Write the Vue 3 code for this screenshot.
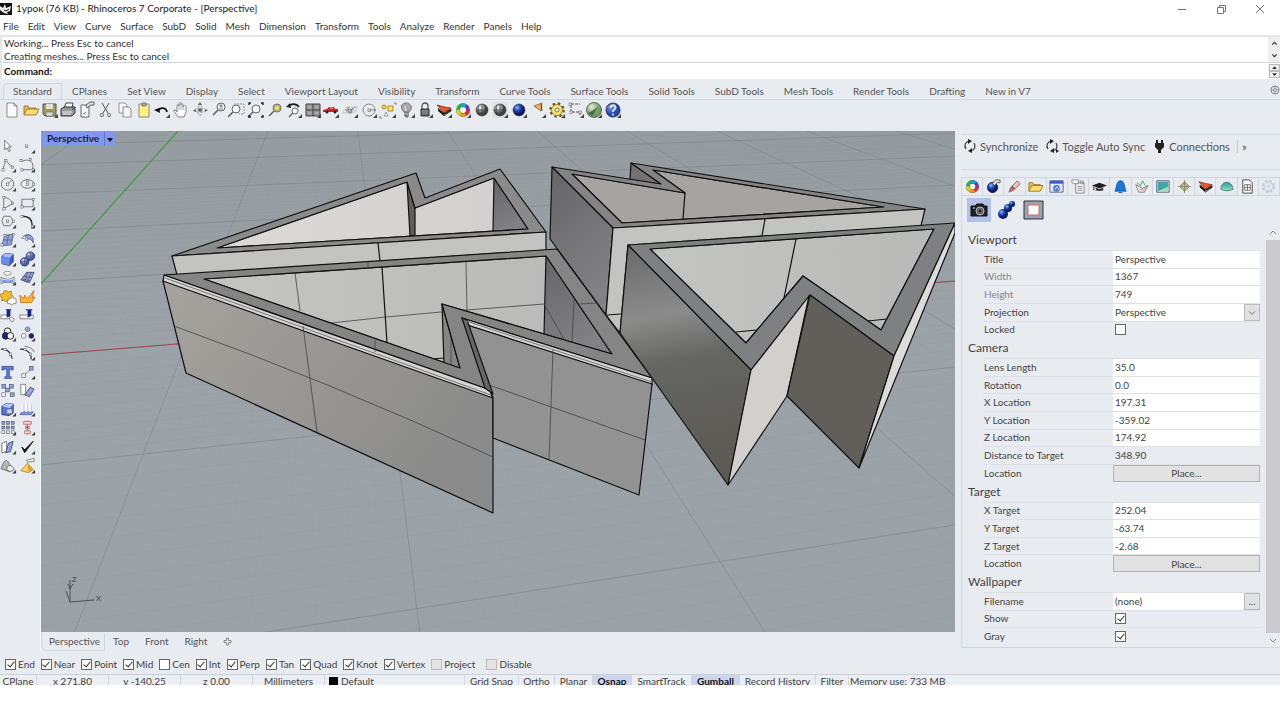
<script setup>
import { reactive, ref } from 'vue'

const menu = ['File', 'Edit', 'View', 'Curve', 'Surface', 'SubD', 'Solid', 'Mesh', 'Dimension', 'Transform', 'Tools', 'Analyze', 'Render', 'Panels', 'Help']

const toolbarTabs = ['Standard', 'CPlanes', 'Set View', 'Display', 'Select', 'Viewport Layout', 'Visibility', 'Transform', 'Curve Tools', 'Surface Tools', 'Solid Tools', 'SubD Tools', 'Mesh Tools', 'Render Tools', 'Drafting', 'New in V7']
const activeTab = ref('Standard')

// shared pieces, all icons are drawn on an 18x18 box
const flyout = '<path d="M17 13v4h-4z" fill="#444"/>'
const hue = ['#e23', '#f90', '#dd0', '#2b3', '#1ad', '#63d']
const wheel = '<circle cx="9" cy="9" r="6.800" fill="#555"/><circle cx="9" cy="9" r="3" fill="#fff"/>' + hue.map((c, i) => `<circle cx="9" cy="9" r="5" fill="none" stroke="${c}" stroke-width="3" stroke-dasharray="5.3 26.2" stroke-dashoffset="${-i * 5.24}"/>`).join('')
const sphere = (id) => `<circle cx="9" cy="9" r="6" fill="url(#${id})" stroke="#333" stroke-width=".6"/>`
const wires = '<path d="M3 9h12M9 3v12M6 4c-1 3-1 7 0 10M12 4c1 3 1 7 0 10" fill="none" stroke="#333" stroke-width=".6"/>'
const layers = '<path d="M3 9l6 6 7-5V8l-7 4z" fill="#fff" stroke="#333" stroke-width=".8"/><path d="M3 7l6 5v3L3 10z" fill="#222"/><path d="M9 12l7-4v2l-7 4z" fill="#222"/><path d="M2 4l8 2 6 1-7 5z" fill="#e8582a" stroke="#7a2010" stroke-width=".7"/>'
const folder = '<path d="M2 14V5h4l1 2h7v2" fill="#e8bd4a" stroke="#8a6a20" stroke-width=".8"/><path d="M2 14l3-6h12l-3 6z" fill="#ffdc6a" stroke="#8a6a20" stroke-width=".8"/>'
const lens = (x, y) => `<circle cx="${x}" cy="${y}" r="4" fill="#f4f6f8" stroke="#666"/><path d="M${x - 3} ${y + 3}l-5 5" stroke="#666" stroke-width="1.6"/>`
const line = (d) => `<path d="${d}" fill="none" stroke="#555" stroke-width=".8"/>`
const dot = (x, y, c = '#fff') => `<rect x="${x - 1}" y="${y - 1}" width="2.4" height="2.4" fill="${c}" stroke="#555" stroke-width=".6"/>`
const box = (x, y, c = '#8fa5e6', s = 4) => `<rect x="${x}" y="${y}" width="${s}" height="${s}" fill="${c}" stroke="#445" stroke-width=".6"/>`

const icons = {
  file: '<path d="M4 2h7l3 3v11H4z" fill="#fafafa" stroke="#777" stroke-width=".8"/><path d="M11 2v3h3" fill="none" stroke="#777" stroke-width=".8"/>',
  open: folder,
  save: '<path d="M2 3h13v12H4l-2-2z" fill="#a59c52" stroke="#555"/><path d="M5 3h7v5H5z" fill="#ddd"/><path d="M5 11h7v4H5z" fill="#ddd" stroke="#555" stroke-width=".6"/>' + flyout,
  print: '<path d="M5 7l2-5h7l-1 5" fill="#fff" stroke="#444"/><path d="M2 8l3-2h11v6l-3 3H2z" fill="#999" stroke="#333"/><path d="M3 11h10M4 13h8" stroke="#eee"/><path d="M13 9l3-3" stroke="#333"/>',
  props: '<path d="M3 4h8v12H3z" fill="#f6f6f6" stroke="#666"/><path d="M8 4l4-3h4v3h-3l-4 3z" fill="#ddd" stroke="#444" stroke-width=".8"/><path d="M5 12l1 1 2-2" fill="none" stroke="#666" stroke-width=".8"/>',
  cut: '<path d="M5 2l6 10M12 2L6 12" stroke="#555"/><circle cx="5" cy="14" r="1.6" fill="none" stroke="#555" stroke-width=".8"/><circle cx="12" cy="14" r="1.6" fill="none" stroke="#555" stroke-width=".8"/>',
  copy: '<path d="M3 2h6l2 2v8H3z" fill="#f6f6f6" stroke="#888" stroke-width=".8"/><path d="M7 6h6l2 2v8H7z" fill="#f6f6f6" stroke="#777" stroke-width=".8"/>',
  paste: '<path d="M4 3h10v13H4z" fill="#fdf07c" stroke="#888"/><path d="M7 2h4v3H7z" fill="#aaa" stroke="#666" stroke-width=".8"/>',
  undo: '<path d="M5 10c2-4 8-4 9 1" fill="none" stroke="#111" stroke-width="1.800"/><path d="M1 9l5-2 1 5z" fill="#111"/>' + flyout,
  pan: '<path d="M6 16l-4-6c0-2 2-1 3 1V5c0-2 2-2 2 0V3c0-2 2-2 2 0v1c0-2 2-2 2 0v2c0-2 3-2 3 0v5l-2 5z" fill="#fff" stroke="#666" stroke-width=".8"/><path d="M7 5v4M9 4v5M11 6v3" stroke="#888" stroke-width=".7"/>',
  rotate: '<ellipse cx="9" cy="9" rx="6" ry="2" fill="none" stroke="#999" stroke-dasharray="3 1" stroke-width=".8"/><ellipse cx="9" cy="9" rx="2" ry="6" fill="none" stroke="#999" stroke-dasharray="3 1" stroke-width=".8"/><path d="M9 7v4M7 9h4" stroke="#333"/><path d="M9 1l2 3H7zM2 10l3-2v3zM17 9l-3-1v3z" fill="#666"/>',
  zoomDyn: lens(11, 6) + '<path d="M9 5h4M11 3v4M9 8h4" stroke="#555" stroke-width=".7"/>',
  zoomWin: lens(8, 8) + '<path d="M6 3h10v10h-5" fill="none" stroke="#777" stroke-dasharray="2 1" stroke-width=".8"/>',
  zoomExt: lens(9, 8) + '<path d="M2 4V2h2M14 2h2v2M16 14v2h-2M2 14v2h2" fill="none" stroke="#222" stroke-width="1.4"/>',
  zoomSel: lens(11, 7) + '<circle cx="11" cy="7" r="2.8" fill="#f3e23a" stroke="#887" stroke-width=".8"/>',
  undoView: '<path d="M4 5c3-3 8-2 10 1" fill="none" stroke="#222" stroke-width="1.800"/><path d="M1 6l4-4 1 5z" fill="#222"/><circle cx="10" cy="10" r="3" fill="#fff" stroke="#666"/><path d="M8 12l-4 4" stroke="#666" stroke-width="1.4"/>' + flyout,
  views: '<path d="M2 3h14v12H2z" fill="#999" stroke="#444"/><path d="M9 3v12M2 9h14" stroke="#444"/><path d="M4 6h3M11 6h3M4 12h3M11 12h3" stroke="#bbb"/>' + flyout,
  car: '<path d="M1 9l4-1 2-2h5l1 2h3v3H1z" fill="#c22"/><circle cx="5" cy="11" r="1.5" fill="#222"/><circle cx="13" cy="11" r="1.5" fill="#222"/><path d="M8 7h3" stroke="#fbb"/>' + flyout,
  cplane: '<path d="M1 12l5-6h11l-4 6zM4 9h11M7 6l-2 6M12 6l-2 6" fill="none" stroke="#bbb" stroke-width=".8"/><path d="M5 10l3-4M8 11l6-5" stroke="#666" stroke-width=".8"/><circle cx="9" cy="10" r="2" fill="none" stroke="#555" stroke-width=".7"/>' + flyout,
  circleC: '<circle cx="9" cy="9" r="6" fill="none" stroke="#888"/><path d="M9 9h7" stroke="#777"/>' + dot(9, 9) + flyout,
  objects: '<circle cx="5" cy="6" r="2" fill="#ffd33b" stroke="#a70" stroke-width=".8"/><path d="M9 5h5v5H9z" fill="#ffe36a" stroke="#a70" stroke-width=".8"/><path d="M7 11l2 4H5z" fill="#fff" stroke="#777" stroke-width=".7"/><path d="M1 15v2h2M15 2h2v2" fill="none" stroke="#666" stroke-width=".8"/>' + flyout,
  bulb: '<path d="M6 11C1 6 4 2 8 2s8 4 3 9z" fill="#aaa" stroke="#777"/><path d="M7 5l1 5" stroke="#eee"/><path d="M6 11h5v4l-2 2-3-2z" fill="#777"/><path d="M6 13h5" stroke="#ccc"/>' + flyout,
  lock: '<path d="M6 8V5c0-4 6-4 6 0v3" fill="none" stroke="#555" stroke-width="1.3"/><path d="M5 8h8v7H5z" fill="#666" stroke="#333"/><path d="M6 10h6M6 12h6" stroke="#999"/>' + flyout,
  layers: layers + flyout,
  wheel: wheel + flyout,
  shade: sphere('gray') + wires,
  shade2: '<path d="M1 1h16v16H1z" fill="#dfe1e4"/>' + sphere('gray') + wires + flyout,
  render: sphere('blue') + flyout,
  spot: '<path d="M5 5l8-3-1 8z" fill="#f8b43a" stroke="#855" stroke-width=".8"/><path d="M12 3l1 7" stroke="#444"/>' + flyout,
  gear: '<circle cx="9" cy="9" r="6.5" fill="none" stroke="#665520" stroke-width="2.400" stroke-dasharray="2.4 2.7"/><circle cx="9" cy="9" r="5.500" fill="#ffe26a" stroke="#776630" stroke-width=".7"/><circle cx="9" cy="9" r="2" fill="#fff" stroke="#554" stroke-width=".8"/>' + flyout,
  dims: '<path d="M4 3h9M4 4v7h9v4" fill="none" stroke="#555" stroke-dasharray="3 1"/>' + dot(3, 3) + dot(4, 11) + dot(13, 11) + flyout,
  hopper: '<circle cx="9" cy="9" r="7.5" fill="url(#green)" stroke="#666"/><path d="M3 12l4-2 6-4-3 5-3 4z" fill="#4b6b45"/>' + flyout,
  help: '<circle cx="9" cy="9" r="7" fill="url(#help)" stroke="#236"/><path d="M6.500 7c0-4 6-3 5 0-.5 1.500-2.500 1.500-2.500 4M9 12.500v2" fill="none" stroke="#fff" stroke-width="1.6"/>' + flyout,

  pointer: '<path d="M5 3v10l2.500-2 2 4 1.500-1-2-4h3z" fill="#fff" stroke="#555" stroke-width=".8"/>',
  point: dot(8, 9) + flyout,
  polyline: line('M3 14L6 4l7 8') + dot(3, 14) + dot(6, 4) + dot(13, 11) + flyout,
  curve: line('M3 5c12-5 14 7 10 9H3') + dot(2, 4) + dot(3, 14) + dot(12, 3) + dot(15, 14) + flyout,
  circle: '<circle cx="8" cy="9" r="6.500" fill="none" stroke="#555" stroke-width=".8"/>' + line('M8 9l4-4') + dot(8, 9) + flyout,
  ellipse: '<ellipse cx="9" cy="9" rx="7" ry="4.500" fill="none" stroke="#555" stroke-width=".8"/>' + dot(9, 9) + dot(15, 9) + dot(9, 5) + flyout,
  arc: line('M4 3v12l9-5c0-3-4-7-9-7') + dot(4, 3) + dot(4, 15) + dot(13, 9) + flyout,
  rect: line('M3 5h12v8H3z') + dot(3, 13) + dot(15, 5) + flyout,
  polygon: line('M4 4h7l3 5-3 5H4L2 9z') + dot(8, 9) + dot(14, 9) + flyout,
  fillet: '<path d="M4 4c7 0 10 4 10 10" fill="none" stroke="#222" stroke-width="1.400"/>' + dot(3, 4) + dot(14, 15) + flyout,
  patch: '<path d="M5 4l9-1-2 11-10 1z" fill="#8fa5e6" stroke="#447" stroke-width=".8"/>' + line('M4 9h9M9 4L7 14') + dot(5, 4) + dot(14, 3) + dot(2, 14) + flyout,
  surface: '<path d="M3 7c3-4 7-5 9-2l-4 5c-1-2-2-3-5-3z" fill="#fff" stroke="#555" stroke-width=".8"/><path d="M6 5c4-3 8-1 9 3v4c-1-3-4-5-6-4z" fill="#8fa5e6" stroke="#447" stroke-width=".8"/>' + flyout,
  cube: '<path d="M2 6l4-3 8 1v8l-4 4-8-2z" fill="#3d5fd0" stroke="#225" stroke-width=".8"/><path d="M2 6l4-3 8 1-4 4z" fill="#a9bbf8"/><path d="M2 6l8 2v8l-8-2z" fill="#6c8ce8"/>' + flyout,
  balls: '<circle cx="6" cy="12" r="4.500" fill="url(#soft)" stroke="#225" stroke-width=".8"/><circle cx="12" cy="6" r="4.500" fill="url(#soft)" stroke="#225" stroke-width=".8"/>' + line('M2 12h8M8 6h8M6 8v8M12 2v8') + flyout,
  cylinder: '<ellipse cx="8" cy="4" rx="4" ry="2" fill="#fff" stroke="#777" stroke-width=".8"/><path d="M1 8c4 3 10 3 14 0v7c-4-2-10-2-14 0z" fill="#fff" stroke="#666" stroke-width=".8"/><path d="M2 10c4 2 9 2 12 0v4c-4-1-8-1-12 0z" fill="#7e99e8"/>' + flyout,
  mesh: '<path d="M2 11l6-8h8l-5 11z" fill="#8fa5e6" stroke="#336" stroke-width=".8"/>' + line('M5 7l9 2M9 3L6 13M3 10l9 2M13 3L8 14') + flyout,
  puzzle: '<path d="M1 6l3-1c-1-3 3-4 4-1l4-1v4c3 0 2 4 0 3l-1 3-3-1c0 3-4 2-3 0l-3 1V9C-1 9 0 6 1 6z" fill="#ffbe2e" stroke="#9a6a10" stroke-width=".8"/><path d="M9 11l3-1c0-2 3-1 2 0l3 1v5h-3c0 2-3 2-3 0H8v-2z" fill="#fff" stroke="#777" stroke-width=".8"/>',
  explode: '<path d="M2 15L1 7l4 4 1-4 3 4 7-9-2 8 3-1-4 6z" fill="#ffb52e" stroke="#b86a10" stroke-width=".8"/>',
  trim: '<path d="M1 9h9v4H1z" fill="#fff" stroke="#666" stroke-width=".8"/><path d="M6 3h6v1h-1v6l-4 2V4H6z" fill="#16258a"/><path d="M10 13l2-2 3 2-1 3h-2z" fill="none" stroke="#777" stroke-width=".8"/>',
  split: '<path d="M1 9h14v4H1z" fill="#fff" stroke="#666" stroke-width=".8"/><path d="M7 3h7v1h-1v6l-4 2V4H7z" fill="#16258a"/>',
  group: '<circle cx="8" cy="6" r="3.500" fill="none" stroke="#222"/><circle cx="6" cy="11" r="3.500" fill="#16258a" stroke="#222"/><circle cx="11" cy="11" r="3.500" fill="#fff" stroke="#222"/>' + flyout,
  ungroup: '<circle cx="9" cy="4" r="2.500" fill="#8fa5e6" stroke="#666" stroke-width=".8"/><circle cx="5" cy="11" r="2.500" fill="#fff" stroke="#666" stroke-width=".8"/><circle cx="13" cy="11" r="2.500" fill="#16258a" stroke="#222" stroke-width=".8"/>' + flyout,
  blend: '<path d="M1 5c6-1 10 3 12 10" fill="none" stroke="#222" stroke-width="1.200"/>' + dot(5, 5) + dot(11, 10),
  match: '<path d="M1 5c7-1 12 4 12 11" fill="none" stroke="#222" stroke-width="1.200"/>' + line('M6 2c5 0 9 3 10 6') + dot(6, 5) + dot(12, 10) + flyout,
  text: '<path d="M2 3h12v4h-2V6h-2v8h2v2H5v-2h2V6H4v1H2z" fill="#5c7ad0" stroke="#2a3e8a" stroke-width=".6"/>',
  move: box(3, 11, '#fff') + box(11, 3) + line('M7 11l4-4') + flyout,
  array: box(2, 3, '#8fa5e6') + box(10, 3) + box(6, 7) + box(2, 12, '#fff') + box(11, 12),
  shear: '<path d="M2 3h5v11H2z" fill="#fff" stroke="#666" stroke-width=".8"/><path d="M6 14l6-8 4 2-5 8z" fill="#8fa5e6" stroke="#335" stroke-width=".8"/>',
  solid: '<path d="M2 6l5-3 7 1v9l-4 3-8-1z" fill="#5878d8" stroke="#225" stroke-width=".8"/><path d="M2 6l5-3 7 1-4 4z" fill="#b9c9fa"/><path d="M7 9h6v5H7z" fill="#c9d5fa" stroke="#446" stroke-width=".6"/>' + flyout,
  extrude: '<path d="M1 15l2-3h12l-2 3z" fill="#7e99e8" stroke="#447" stroke-width=".6"/><path d="M4 12V4M8 12V4M12 12V4" stroke="#fff" stroke-width="2"/><path d="M5 12V4M9 12V4M13 12V4" stroke="#aac" stroke-width=".6"/>' + flyout,
  grid: [2, 7, 12].map((x) => [2, 7, 12].map((y) => box(x, y, y > 7 ? '#fff' : '#8fa5e6', 3)).join('')).join('') + flyout,
  align: '<path d="M9 1v15" stroke="#b55" stroke-width=".8"/><path d="M5 2h8v3H5zM7 7h4v3H7zM6 12h6v3H6z" fill="#f2dede" stroke="#b55" stroke-width=".8"/><circle cx="9" cy="8.500" r="1" fill="#a22"/>' + flyout,
  panels: '<path d="M2 5l5-2v11l-5 1z" fill="#fff" stroke="#555" stroke-width=".8"/><path d="M6 15l3-10 5-2-3 11z" fill="#8fa5e6" stroke="#335" stroke-width=".8"/>' + flyout,
  check: '<path d="M3 9l3 3 9-9-9 12z" fill="#111" stroke="#111"/>' + flyout,
  hull: '<path d="M1 12l3-7c2-3 4-2 5 0l5 8-4 2z" fill="#b8b8b8" stroke="#666" stroke-width=".8"/><path d="M7 13c0-6 6-6 8 0l-4 2z" fill="#eee" stroke="#555" stroke-width=".8"/>' + flyout,
  pyramid: '<path d="M2 14l7-8 6 7-5 3z" fill="#ffd060" stroke="#a67a20" stroke-width=".8"/><path d="M9 6l1 10 5-3z" fill="#d8a030"/><path d="M8 3l8-2v3L9 5z" fill="#fff" stroke="#666" stroke-width=".8"/>' + flyout,

  renderProps: '<circle cx="8" cy="10" r="5.500" fill="url(#blue)" stroke="#124" stroke-width=".8"/><path d="M8 6l3-4h5v3h-3l-3 3z" fill="#ddd" stroke="#444" stroke-width=".8"/>',
  brush: '<path d="M3 15l2-5 3 3z" fill="#d86a4a" stroke="#855" stroke-width=".8"/><path d="M6 9l6-6 3 3-6 6z" fill="#e8c8b8" stroke="#744" stroke-width=".8"/><path d="M6 9l3 3" stroke="#a44" stroke-width="2"/>',
  display: '<path d="M2 3h14v12H2z" fill="#dfe6f8" stroke="#668"/><path d="M2 3h14v3H2z" fill="#3b5cc0"/><circle cx="9" cy="11" r="3.500" fill="#5577c8"/><path d="M8 12c0-3 3-3 3 0" fill="none" stroke="#fff"/>',
  notes: '<path d="M6 5h9v11H6z" fill="#eee" stroke="#777" stroke-width=".8"/><path d="M2 2h7v4H5L2 5z" fill="#fff" stroke="#777" stroke-width=".8"/><path d="M11 3h3v3h-3zM8 9h5M8 11h5M8 13h5" fill="none" stroke="#888" stroke-width=".8"/>',
  hat: '<path d="M1 8l8-3 8 3-8 3z" fill="#222"/><path d="M5 10v3c2 1 6 1 8 0v-3l-4 2z" fill="#333"/><path d="M3 9v4" stroke="#222"/>',
  bell: '<path d="M3 14c2-2 1-11 6-11s4 9 6 11z" fill="#1877e0" stroke="#0b4aa0" stroke-width=".8"/><path d="M7 15h4v1H7z" fill="#0b4aa0"/>',
  library: '<path d="M3 7l3 8h6l4-7-6 3z" fill="#eef2ee" stroke="#666" stroke-width=".8"/><path d="M4 5l4 3 2-5 3 5" fill="none" stroke="#3a8a4a" stroke-width=".8"/><path d="M7 12l4 1 3-4" fill="none" stroke="#c66" stroke-width=".8"/>',
  env: '<path d="M3 3h13v12H3z" fill="#e8f4f2" stroke="#557"/><path d="M4 4h11v7l-11 3z" fill="#3fa9a8"/><path d="M4 14l11-5v5z" fill="#a5dcb0"/>',
  diamond: '<path d="M9 4l5 5-5 5-5-5z" fill="#c8b878" stroke="#665" stroke-width=".8"/><path d="M9 2v14M2 9h14" stroke="#776" stroke-width=".7"/>',
  plainLayers: layers,
  plainWheel: wheel,
  dome: '<path d="M3 12c0-10 12-10 13 0-3 2-10 2-13 0z" fill="url(#teal)" stroke="#376" stroke-width=".8"/>',
  sheet: '<path d="M4 2h7l3 3v11H4z" fill="#fafafa" stroke="#444"/><path d="M6 7h6v6H6zM6 10h6M9 7v6" fill="none" stroke="#555" stroke-width=".8"/>',
  cog: '<circle cx="9" cy="9" r="6" fill="none" stroke="#c2cbda" stroke-width="2" stroke-dasharray="3 1.700"/><circle cx="9" cy="9" r="4.500" fill="none" stroke="#c2cbda"/><circle cx="9" cy="9" r="1.500" fill="none" stroke="#c2cbda"/>',
}

const standardTools = ['file', 'open', 'save', 'print', 'props', 'cut', 'copy', 'paste', 'undo', 'pan', 'rotate', 'zoomDyn', 'zoomWin', 'zoomExt', 'zoomSel', 'undoView', 'views', 'car', 'cplane', 'circleC', 'objects', 'bulb', 'lock', 'layers', 'wheel', 'shade', 'shade2', 'render', 'spot', 'gear', 'dims', 'hopper', 'help']

const sideTools = ['pointer', 'point', 'polyline', 'curve', 'circle', 'ellipse', 'arc', 'rect', 'polygon', 'fillet', 'patch', 'surface', 'cube', 'balls', 'cylinder', 'mesh', 'puzzle', 'explode', 'trim', 'split', 'group', 'ungroup', 'blend', 'match', 'text', 'move', 'array', 'shear', 'solid', 'extrude', 'grid', 'align', 'panels', 'check', 'hull', 'pyramid']

const panelTabs = ['plainWheel', 'renderProps', 'brush', 'open', 'display', 'notes', 'hat', 'bell', 'library', 'env', 'diamond', 'plainLayers', 'dome', 'sheet', 'cog']

const sections = reactive([
  {
    name: 'Viewport',
    rows: [
      { label: 'Title', type: 'text', value: 'Perspective' },
      { label: 'Width', type: 'text', value: '1367', muted: true },
      { label: 'Height', type: 'text', value: '749', muted: true },
      { label: 'Projection', type: 'select', value: 'Perspective' },
      { label: 'Locked', type: 'check', value: false },
    ],
  },
  {
    name: 'Camera',
    rows: [
      { label: 'Lens Length', type: 'text', value: '35.0' },
      { label: 'Rotation', type: 'text', value: '0.0' },
      { label: 'X Location', type: 'text', value: '197.31' },
      { label: 'Y Location', type: 'text', value: '-359.02' },
      { label: 'Z Location', type: 'text', value: '174.92' },
      { label: 'Distance to Target', type: 'output', value: '348.90' },
      { label: 'Location', type: 'button', value: 'Place...' },
    ],
  },
  {
    name: 'Target',
    rows: [
      { label: 'X Target', type: 'text', value: '252.04' },
      { label: 'Y Target', type: 'text', value: '-63.74' },
      { label: 'Z Target', type: 'text', value: '-2.68' },
      { label: 'Location', type: 'button', value: 'Place...' },
    ],
  },
  {
    name: 'Wallpaper',
    rows: [
      { label: 'Filename', type: 'file', value: '(none)' },
      { label: 'Show', type: 'check', value: true },
      { label: 'Gray', type: 'check', value: true },
    ],
  },
])

const snaps = reactive([
  { name: 'End', on: true },
  { name: 'Near', on: true },
  { name: 'Point', on: true },
  { name: 'Mid', on: true },
  { name: 'Cen', on: false },
  { name: 'Int', on: true },
  { name: 'Perp', on: true },
  { name: 'Tan', on: true },
  { name: 'Quad', on: true },
  { name: 'Knot', on: true },
  { name: 'Vertex', on: true },
  { name: 'Project', on: false, off: true },
  { name: 'Disable', on: false, off: true },
])

const modes = ['Grid Snap', 'Ortho', 'Planar', 'Osnap', 'SmartTrack', 'Gumball', 'Record History', 'Filter']
const activeModes = ['Osnap', 'Gumball']

// construction plane grid: both line families run to their vanishing points
const majorRows = [131, 145, 165, 194, 231, 282, 355, 465, 667, 900]
const rowLine = (y) => `M41 ${y}L955 ${Math.round(y - 0.22 * (y - 20))}`
const columnLine = (x) => `M336 -45L${Math.round(336 + (x - 336) * 1.6)} 667`

let minorRows = ''
let minorColumns = ''
let major = ''
majorRows.forEach((y, i) => {
  major += rowLine(y)
  const next = majorRows[i + 1]
  if (next && y > 150) {
    for (let k = 1; k < 10; k++) minorRows += rowLine(Math.round(y + ((next - y) * k) / 10))
  }
})
for (let i = -40; i < 110; i++) {
  const x = -63 + Math.round(i * 22.7)
  if (i % 10) minorColumns += columnLine(x)
  else if (i) major += columnLine(x)
}
</script>

<template>
  <div class="app">
    <svg class="defs" aria-hidden="true">
      <defs>
        <radialGradient id="gray" cx=".35" cy=".3"><stop offset="0" stop-color="#fff" /><stop offset="1" stop-color="#444" /></radialGradient>
        <radialGradient id="blue" cx=".35" cy=".3"><stop offset="0" stop-color="#9cc0ff" /><stop offset=".5" stop-color="#2450c0" /><stop offset="1" stop-color="#0a1c66" /></radialGradient>
        <radialGradient id="help" cx=".35" cy=".3"><stop offset="0" stop-color="#7f9cf0" /><stop offset="1" stop-color="#2444b0" /></radialGradient>
        <radialGradient id="soft" cx=".35" cy=".3"><stop offset="0" stop-color="#c5d2fb" /><stop offset="1" stop-color="#3d5fd0" /></radialGradient>
        <radialGradient id="green" cx=".35" cy=".3"><stop offset="0" stop-color="#e2f2da" /><stop offset="1" stop-color="#6f9a62" /></radialGradient>
        <linearGradient id="teal" x2="0" y2="1"><stop offset="0" stop-color="#2f9aa0" /><stop offset="1" stop-color="#8fdcc8" /></linearGradient>
      </defs>
    </svg>

    <header class="titlebar">
      <svg class="logo" viewBox="0 0 12 12"><path d="M0 0h12v12H0z" fill="#111" /><path d="M0 3l3 2 2-4 1 4 5-2-1 5-3 1 1 2-4-1-4-3z" fill="#eee" /><path d="M4 7l2 1 3-2" fill="none" stroke="#111" /></svg>
      <span class="title">1урок (76 KB) - Rhinoceros 7 Corporate - [Perspective]</span>
      <div class="window-btns">
        <button aria-label="Minimize"><svg viewBox="0 0 10 10"><path d="M1 5.500h8" /></svg></button>
        <button aria-label="Restore"><svg viewBox="0 0 10 10"><path d="M1.500 3.500h6v6h-6zM3.500 3.500v-2h6v6h-2" /></svg></button>
        <button aria-label="Close"><svg viewBox="0 0 10 10"><path d="M1 1l8 8M9 1l-8 8" /></svg></button>
      </div>
    </header>

    <nav class="menu">
      <button v-for="item in menu" :key="item">{{ item }}</button>
    </nav>

    <section class="command">
      <div class="history">
        <div>
          <p>Working... Press Esc to cancel</p>
          <p>Creating meshes... Press Esc to cancel</p>
        </div>
        <div class="arrows">
          <svg viewBox="0 0 8 8"><path d="M2 5l2-2 2 2" /></svg>
          <svg viewBox="0 0 8 8"><path d="M2 3l2 2 2-2" /></svg>
        </div>
      </div>
      <div class="prompt">
        <label for="command">Command:</label>
        <input id="command" type="text" />
        <div class="spin">
          <button aria-label="Previous"><svg viewBox="0 0 8 4"><path d="M2 3l2-2 2 2z" /></svg></button>
          <button aria-label="Next"><svg viewBox="0 0 8 4"><path d="M2 1l2 2 2-2z" /></svg></button>
        </div>
      </div>
    </section>

    <nav class="tabs">
      <button v-for="tab in toolbarTabs" :key="tab" :class="{ active: tab === activeTab }" @click="activeTab = tab">{{ tab }}</button>
      <svg class="tabs-gear" viewBox="0 0 10 10"><circle cx="5" cy="5" r="4" /><circle cx="5" cy="5" r="1.500" /><path d="M5 1v2M5 7v2M1 5h2M7 5h2" /></svg>
    </nav>

    <div class="toolbar">
      <div class="tools">
        <button v-for="name in standardTools" :key="name" :aria-label="name">
          <svg viewBox="0 0 18 18" v-html="icons[name]"></svg>
        </button>
      </div>
    </div>

    <main class="workspace">
      <aside class="side">
        <div class="side-tools">
          <button v-for="name in sideTools" :key="name" :aria-label="name">
            <svg viewBox="0 0 18 18" v-html="icons[name]"></svg>
          </button>
        </div>
      </aside>

      <div class="center">
        <div class="viewport">
          <svg class="scene" viewBox="41 131 914 501" preserveAspectRatio="xMidYMid slice">
            <defs>
              <linearGradient id="sky" x2="0" y2="1"><stop offset="0" stop-color="#969da1" /><stop offset=".4" stop-color="#9ba3a8" /><stop offset="1" stop-color="#9aa2a8" /></linearGradient>
              <linearGradient id="front" x2="1" y2=".5"><stop offset="0" stop-color="#a5a39d" /><stop offset="1" stop-color="#8b8b8b" /></linearGradient>
              <linearGradient id="left" x2=".1" y2="1"><stop offset="0" stop-color="#686869" /><stop offset=".32" stop-color="#8b8b8b" /><stop offset=".52" stop-color="#656562" /><stop offset="1" stop-color="#5b5a55" /></linearGradient>
              <linearGradient id="dark" x2=".4" y2="1"><stop offset="0" stop-color="#656567" /><stop offset="1" stop-color="#828284" /></linearGradient>
              <linearGradient id="pale" x2="1"><stop offset="0" stop-color="#c4c4c3" /><stop offset="1" stop-color="#b9b9b8" /></linearGradient>
              <linearGradient id="bright" x2="1"><stop offset="0" stop-color="#dcdad8" /><stop offset="1" stop-color="#d2d0ce" /></linearGradient>
            </defs>
            <path d="M41 131h914v501H41z" fill="url(#sky)" />
            <path :d="minorRows" class="grid-minor" />
            <path :d="minorColumns" class="grid-minor faint" />
            <path :d="major" class="grid-major" />
            <path d="M41 355L955 281" stroke="#a0484f" fill="none" />
            <path d="M41 284L178 131" stroke="#4b9a50" stroke-width="1.400" fill="none" />

            <!-- back left -->
            <g class="solid">
              <path d="M217 248L407 182L415 208L494 178L528 229Z" fill="url(#bright)" />
              <path d="M407 182L415 208V235L410 236Z" fill="#5e5e5e" />
              <path d="M494 178L528 229L493 231Z" fill="url(#dark)" />
              <path d="M172 256L416 173L425 198L500 169L546 232ZM217 248L528 229L494 178L415 208L407 182Z" fill="#8a8a8a" fill-rule="evenodd" />
              <path d="M172 256L546 232V250L177 275Z" fill="#c3c3c2" />
              <path d="M378 243L380 261" />
            </g>

            <!-- back right -->
            <g class="solid">
              <path d="M572 174L685 193L653 170L884 207L622 223Z" fill="#a6a4a1" />
              <path d="M631 163L661 184L630 180Z" fill="#737375" />
              <path d="M685 193L683 219" />
              <path d="M552 167L661 184L631 163L925 209L613 228ZM572 174L622 223L884 207L653 170L685 193Z" fill="#848484" fill-rule="evenodd" />
              <path d="M552 167L613 228L606 315L550 239Z" fill="url(#dark)" />
              <path d="M613 228L925 209L921 226L628 245L620 333L606 315Z" fill="#c3c3c2" />
              <path d="M765 219L762 236M607 315L621 314" />
            </g>

            <!-- front left, with rounded rim -->
            <g class="solid">
              <path d="M204 279L546 256L612 354L442 304L460 368Z" fill="url(#pale)" />
              <path d="M546 256L612 354L544 334Z" fill="url(#dark)" />
              <path d="M442 304L460 368L444 364Z" fill="#858585" />
              <path class="iso" d="M295 273L300 311M466 262L467 311M313 325L386 317L441 312L544 304L565 341M574 300L572 342M451 334V366" />
              <path d="M382 267L387 343M432 359L444 358" />
              <path d="M164 275L557 249L652 378L462 318L490 390ZM204 279L460 368L442 304L612 354L546 256Z" fill="#858585" fill-rule="evenodd" />
              <path d="M164 275L490 390L493 400L163 282Z" fill="#d4d4d4" />
              <path d="M462 318L652 378L652 385L467 325Z" fill="#d4d4d4" />
              <path d="M163 281L493 398L493 513L186 373Z" fill="url(#front)" />
              <path d="M467 325L652 384L639 495L493 438V398Z" fill="#929292" />
              <path d="M462 318L467 320L493 394L485 388Z" fill="#666" />
              <path class="rim" d="M165 278L491 395M466 321L652 382" />
              <path class="iso" d="M174 326Q330 382 493 457M303 326L317 432M489 385L645 440M553 350L549 460M597 303L580 304M368 262V268M375 340V352" />
            </g>

            <!-- front right -->
            <g class="solid">
              <path d="M650 249L934 229L881 330L803 276L746 343Z" fill="url(#pale)" />
              <path d="M736 332L757 330M868 321L887 319M796 239L784 298" />
              <path d="M628 245L955 223L894 356L810 295L751 370ZM650 249L746 343L803 276L881 330L934 229Z" fill="#7e8081" fill-rule="evenodd" />
              <path d="M628 245L751 370L728 485L620 333Z" fill="url(#left)" />
              <path d="M751 370L809 296L787 396L728 485Z" fill="#d2d0cc" />
              <path d="M810 295L894 356L859 468L787 396Z" fill="#605f5a" />
              <path d="M955 223L894 356L859 468L955 233Z" fill="#dcdcdb" />
            </g>

            <g class="axes">
              <path d="M70 602L94 600M70 602V580M70 602L66 591M68 584l2 5 3-5" />
              <text x="72" y="582">z</text>
              <text x="96" y="601">x</text>
            </g>
          </svg>
          <button class="view-title"><span>Perspective</span><svg viewBox="0 0 8 8"><path d="M1 2h6L4 6z" /></svg></button>
        </div>

        <nav class="view-tabs">
          <button class="active">Perspective</button>
          <button>Top</button>
          <button>Front</button>
          <button>Right</button>
          <button aria-label="Add viewport"><svg viewBox="0 0 9 9"><path d="M3.500 1h2v2.500H8v2H5.500V8h-2V5.500H1v-2h2.500z" /></svg></button>
        </nav>
      </div>

      <aside class="panel">
        <div class="sync">
          <button><svg viewBox="0 0 14 14"><path d="M3 10A5 5 0 0 1 6 2M11 4a5 5 0 0 1-3 8" /><path class="fill" d="M5 0l4 2-4 3zM9 9l-4 3 4 2z" /></svg>Synchronize</button>
          <button><svg viewBox="0 0 14 14"><path d="M3 10A5 5 0 0 1 6 2M11 4a5 5 0 0 1-3 8" /><path class="fill" d="M5 0l4 2-4 3zM9 9l-4 3 4 2zM11 10l3 2-3 2z" /></svg>Toggle Auto Sync</button>
          <button><svg viewBox="0 0 14 14"><path class="fill" d="M4 1h2v3h3V1h2v3h1v4l-3 3v3H6v-3L3 8V4h1z" /></svg>Connections</button>
          <button class="more">»</button>
        </div>

        <div class="panel-tabs">
          <button v-for="name in panelTabs" :key="name" :aria-label="name">
            <svg viewBox="0 0 18 18" v-html="icons[name]"></svg>
          </button>
        </div>

        <div class="panel-main">
          <div class="panel-body">
            <div class="kinds">
              <button class="active" aria-label="Camera">
                <svg viewBox="0 0 22 22"><path d="M3 7h4l2-2h6l1 2h3v10H3z" fill="#222" stroke="#111" /><circle cx="12" cy="12" r="4" fill="#555" stroke="#bbb" /><circle cx="12" cy="12" r="2" fill="#111" stroke="#888" /><path d="M5 9h2" stroke="#ccc" /></svg>
              </button>
              <button aria-label="Material">
                <svg viewBox="0 0 22 22"><circle cx="8" cy="15" r="5" fill="url(#blue)" /><circle cx="13" cy="9" r="4" fill="url(#blue)" /><circle cx="17" cy="5" r="3" fill="url(#blue)" /></svg>
              </button>
              <button aria-label="Frame">
                <svg viewBox="0 0 22 22"><path d="M2 2h19v18H2z" fill="#98a3b3" stroke="#333" /><path d="M6 6h11v10H6z" fill="#fff" stroke="#d66" /></svg>
              </button>
            </div>

            <template v-for="section in sections" :key="section.name">
              <h3>{{ section.name }}</h3>
              <div v-for="row in section.rows" :key="row.label" class="row" :class="{ muted: row.muted }">
                <label :for="section.name + row.label">{{ row.label }}</label>
                <div class="value">
                  <input v-if="row.type === 'text'" :id="section.name + row.label" v-model="row.value" type="text" />
                  <div v-else-if="row.type === 'select'" class="drop">
                    <select :id="section.name + row.label" v-model="row.value">
                      <option>Perspective</option>
                      <option>Parallel</option>
                    </select>
                    <svg viewBox="0 0 8 8"><path d="M1 3l3 3 3-3" /></svg>
                  </div>
                  <input v-else-if="row.type === 'check'" :id="section.name + row.label" v-model="row.value" type="checkbox" />
                  <output v-else-if="row.type === 'output'" :id="section.name + row.label">{{ row.value }}</output>
                  <button v-else-if="row.type === 'button'" :id="section.name + row.label" class="place">{{ row.value }}</button>
                  <template v-else>
                    <input :id="section.name + row.label" v-model="row.value" type="text" />
                    <button class="browse">...</button>
                  </template>
                </div>
              </div>
            </template>
          </div>

          <div class="scrollbar">
            <svg viewBox="0 0 8 8"><path d="M1 5l3-3 3 3" /></svg>
            <div class="thumb"></div>
            <svg viewBox="0 0 8 8"><path d="M1 3l3 3 3-3" /></svg>
          </div>
        </div>
      </aside>
    </main>

    <div class="osnap">
      <label v-for="snap in snaps" :key="snap.name" :class="{ off: snap.off }">
        <input v-model="snap.on" type="checkbox" />{{ snap.name }}
      </label>
    </div>

    <footer class="status">
      <button>CPlane</button>
      <span>x 271.80</span>
      <span>y -140.25</span>
      <span>z 0.00</span>
      <button>Millimeters</button>
      <button class="layer"><i></i>Default</button>
      <button v-for="mode in modes" :key="mode" :class="{ on: activeModes.includes(mode) }">{{ mode }}</button>
      <span class="memory">Memory use: 733 MB</span>
    </footer>
  </div>
</template>

<style>
body {
  margin: 0;
  background: #fff;
}
</style>

<style scoped>
.app {
  display: flex;
  flex-direction: column;
  box-sizing: border-box;
  height: 100vh;
  min-height: 600px;
  padding-bottom: 35px;
  background: #fff;
  color: #444;
  font-family: Lato, 'Open Sans', sans-serif;
  font-size: 10px;
  line-height: 13px;
}

.defs {
  position: absolute;
  width: 0;
  height: 0;
}

button,
input,
select {
  font: inherit;
  color: inherit;
  margin: 0;
  padding: 0;
  border: 0;
  border-radius: 0;
  background: none;
  appearance: none;
  outline: none;
}

button {
  white-space: nowrap;
}

p,
h3 {
  margin: 0;
  font-weight: normal;
}

svg {
  display: block;
}

/* title and menu */
.titlebar {
  display: flex;
  align-items: center;
  height: 17px;
  color: #222;
}

.logo {
  width: 12px;
  height: 12px;
}

.title {
  flex: 1;
  padding-left: 4px;
}

.window-btns {
  display: flex;
  gap: 29px;
  padding-right: 15px;
}

.window-btns svg {
  width: 10px;
  height: 10px;
  fill: none;
  stroke: #777;
}

.menu {
  display: flex;
  gap: 9px;
  height: 18px;
  padding: 0 3px;
  border-bottom: 2px solid #e3e6ea;
  color: #333;
}

/* command line */
.command {
  border-left: 2px solid #e3e6ea;
  color: #333;
}

.history {
  display: flex;
  justify-content: space-between;
  height: 25px;
  padding-left: 2px;
  border-bottom: 1px solid #ccd5e2;
}

.arrows,
.spin {
  display: flex;
  flex-direction: column;
  justify-content: space-around;
  align-items: center;
  width: 12px;
  background: #eee;
}

.arrows svg {
  width: 9px;
  height: 9px;
  fill: none;
  stroke: #333;
}

.prompt {
  display: flex;
  align-items: center;
  height: 16px;
  padding-left: 2px;
}

.prompt label {
  font-weight: bold;
  color: #111;
}

.prompt input {
  flex: 1;
}

.spin button {
  border: 1px solid #bbb;
}

.spin svg {
  width: 9px;
  height: 5px;
}

/* toolbar tabs */
.tabs {
  display: flex;
  align-items: flex-end;
  height: 20px;
  padding-left: 3px;
  background: #e8ebef;
  border-bottom: 1px solid #cfd8e2;
}

.tabs button {
  height: 16px;
  padding: 0 10px;
  color: #555;
}

.tabs button.active {
  border: 1px solid #cfd8e2;
  border-bottom: 0;
  border-top-left-radius: 5px;
  padding: 0 9px;
}

.tabs-gear {
  width: 10px;
  height: 10px;
  margin: 0 0 4px auto;
  fill: none;
  stroke: #888;
}

.toolbar {
  padding: 1px 0 12px 3px;
  background: #e8ebef;
}

.tools {
  display: grid;
  grid-template-columns: repeat(33, 1fr);
  max-width: 620px;
}

.toolbar svg,
.panel-tabs svg {
  width: 18px;
  height: 18px;
}

/* workspace */
.workspace {
  flex: 1;
  display: flex;
  min-height: 0;
  background: #e8ebef;
}

.side {
  flex: 0 0 40px;
  padding-top: 6px;
  border-right: 1px solid #f6f8fa;
}

.side-tools {
  display: grid;
  grid-template-columns: 19px 19px;
  grid-template-rows: repeat(18, 1fr);
  height: 338px;
}

.side-tools svg {
  width: 17px;
  height: 18px;
}

.center {
  flex: 1;
  display: flex;
  flex-direction: column;
  min-width: 0;
}

.viewport {
  position: relative;
  flex: 1;
  min-height: 0;
}

.scene {
  width: 100%;
  height: 100%;
}

.grid-minor {
  fill: none;
  stroke: #868f95;
  stroke-width: 0.5;
  opacity: 0.3;
}

.faint {
  opacity: 0.15;
}

.grid-major {
  fill: none;
  stroke: #7d858b;
  stroke-width: 1;
  opacity: 0.6;
}

.solid path {
  stroke: #111;
  stroke-width: 1.2;
  stroke-linejoin: round;
}

.solid .iso {
  fill: none;
  stroke: #444;
  stroke-width: 0.8;
}

.solid .rim {
  fill: none;
  stroke: #777;
  stroke-width: 1;
}

.axes path {
  fill: none;
  stroke: #4c5258;
}

.axes text {
  fill: #4c5258;
  font-size: 10px;
}

.view-title {
  position: absolute;
  top: 1px;
  left: 0;
  display: flex;
  height: 14px;
  background: #8298ec;
  color: #18203c;
  font-weight: bold;
}

.view-title span {
  padding: 0 5px 0 6px;
  border-right: 1px solid #6478c8;
}

.view-title svg {
  width: 8px;
  height: 8px;
  margin: 4px 1px;
  fill: #111;
}

.view-tabs {
  display: flex;
  align-items: center;
  height: 19px;
  gap: 16px;
  color: #555;
}

.view-tabs .active {
  height: 18px;
  padding: 0 4px 0 7px;
  margin-right: -8px;
  border: 1px solid #cfd8e2;
  border-top: 0;
  border-bottom-left-radius: 6px;
}

.view-tabs svg {
  width: 9px;
  height: 9px;
  fill: none;
  stroke: #888;
}

/* properties panel */
.panel {
  flex: 0 0 25%;
  display: flex;
  flex-direction: column;
  box-sizing: border-box;
  margin-left: 5px;
  padding: 3px 0 3px 1px;
}

.sync {
  display: flex;
  align-items: center;
  gap: 7px;
  height: 22px;
  padding: 0 0 12px 2px;
  border-top: 1px solid #d3dae4;
  border-bottom: 1px solid #d3dae4;
  font-size: 11px;
  color: #555;
}

.sync button {
  display: flex;
  align-items: center;
  gap: 3px;
}

.sync svg {
  width: 14px;
  height: 14px;
  fill: none;
  stroke: #333;
  stroke-width: 1.2;
}

.sync .fill {
  fill: #222;
  stroke: none;
}

.sync .more {
  padding-left: 4px;
  border-left: 1px solid #c4cad2;
}

.panel-tabs {
  display: grid;
  grid-template-columns: repeat(15, 1fr);
  margin-top: 7px;
  border: 1px solid #cfd8e4;
  border-right: 0;
}

.panel-tabs button {
  display: flex;
  justify-content: center;
  border-right: 1px solid #cfd8e4;
}

.panel-tabs svg {
  width: 17px;
  height: 17px;
}

.panel-main {
  flex: 1;
  display: flex;
  gap: 6px;
  min-height: 0;
  border-left: 1px solid #cfd8e4;
  border-bottom: 1px solid #cfd8e4;
}

.panel-body {
  flex: 1;
  display: flex;
  flex-direction: column;
  padding: 2px 0 2px 5px;
}

.kinds {
  display: flex;
  gap: 3px;
  margin-bottom: 8px;
}

.kinds button {
  width: 24px;
  height: 24px;
}

.kinds button.active {
  background: #b3c1ea;
}

.kinds svg {
  width: 22px;
  height: 22px;
  margin: 1px;
}

h3 {
  flex: 0 0 20px;
  padding-left: 1px;
  font-size: 12px;
  line-height: 20px;
  color: #444;
}

.row {
  flex: 1 1 17px;
  display: flex;
  min-height: 0;
  margin-left: 16px;
  border-top: 1px solid #dde1e6;
  box-sizing: border-box;
}

.row label {
  flex: 1;
  align-self: center;
  padding-left: 1px;
}

.row.muted label {
  color: #888;
}

.value {
  display: flex;
  width: 147px;
}

.value input[type='text'] {
  flex: 1;
  min-width: 0;
  padding-left: 2px;
  background: #fff;
}

.value output {
  align-self: center;
  padding-left: 2px;
}

.drop {
  flex: 1;
  display: grid;
  grid-template-columns: 1fr 16px;
}

.drop select {
  grid-area: 1 / 1 / 2 / 3;
  padding-left: 2px;
  background: #fff;
}

.drop svg {
  grid-area: 1 / 2;
  box-sizing: border-box;
  width: 16px;
  height: 100%;
  padding: 3px;
  background: #e1e1e1;
  border: 1px solid #bbb;
  fill: none;
  stroke: #777;
  pointer-events: none;
}

.place {
  flex: 1;
  line-height: 14px;
  background: #e1e1e1;
  border: 1px solid #b4b4b4;
}

.browse {
  width: 16px;
  line-height: 10px;
  background: #e1e1e1;
  border: 1px solid #bbb;
}

input[type='checkbox'] {
  flex: none;
  align-self: center;
  display: grid;
  place-content: center;
  box-sizing: border-box;
  width: 11px;
  height: 11px;
  background: #fff;
  border: 1px solid #666;
}

.value input[type='checkbox'] {
  margin-left: 2px;
}

input[type='checkbox']:checked::before {
  content: '';
  box-sizing: border-box;
  width: 4px;
  height: 7px;
  margin-bottom: 2px;
  border: solid #333;
  border-width: 0 1px 1px 0;
  transform: rotate(40deg);
}

.scrollbar {
  display: flex;
  flex-direction: column;
  align-items: center;
  width: 14px;
  margin-top: 30px;
}

.scrollbar svg {
  width: 8px;
  height: 8px;
  margin: 3px 0;
  fill: none;
  stroke: #888;
}

.thumb {
  flex: 1;
  width: 100%;
  background: #cbcbcf;
}

/* object snaps and status bar */
.osnap {
  display: flex;
  align-items: center;
  gap: 6px;
  height: 23px;
  padding: 0 5px;
  background: #e8ebef;
  border-bottom: 1px solid #c8d2de;
  color: #444;
}

.osnap label {
  display: flex;
  align-items: center;
  gap: 2px;
  padding-top: 3px;
}

.osnap .off {
  margin-right: 5px;
}

.osnap .off input {
  background: #e4e4e4;
  border-color: #bbb;
}

.status {
  display: grid;
  grid-template-columns: 37px repeat(4, 72px) 140px 54px 36px 38px 39px 60px 48px 76px 33px 1fr;
  height: 10px;
  overflow: hidden;
  background: #ebeef2;
}

.status > * {
  height: 13px;
  box-sizing: border-box;
  border-right: 1px solid #d3d9e1;
  text-align: center;
  white-space: nowrap;
}

.status .layer {
  display: flex;
  align-items: center;
  gap: 3px;
  padding-left: 4px;
}

.layer i {
  width: 9px;
  height: 9px;
  background: #000;
}

.status .on {
  background: #ccd6ee;
  color: #111;
  font-weight: bold;
}

.status .memory {
  padding-left: 1px;
  border: 0;
  text-align: left;
}
</style>
